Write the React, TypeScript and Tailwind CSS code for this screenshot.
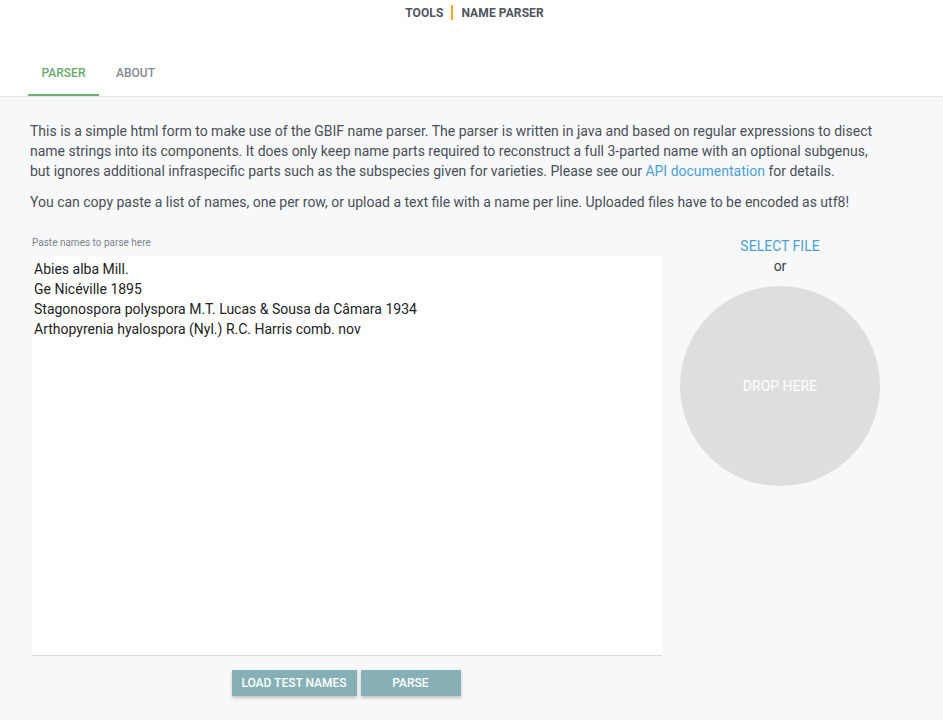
import React from 'react';

const names = [
  'Abies alba Mill.',
  'Ge Nicéville 1895',
  'Stagonospora polyspora M.T. Lucas & Sousa da Câmara 1934',
  'Arthopyrenia hyalospora (Nyl.) R.C. Harris comb. nov',
];

export default function App() {
  return (
    <div className="min-h-[720px] bg-[#f7f8fa] font-['Roboto',sans-serif] text-[#4a4f56]">
      {/* Top bar */}
      <div className="bg-white">
        <div className="flex h-[25px] items-center justify-center pl-[6px] text-[12px] font-bold tracking-[0.1px] text-[#4f555d]">
          <span>TOOLS</span>
          <span className="mx-[8px] h-[15px] w-[2px] bg-[#f5a623]" />
          <span>NAME PARSER</span>
        </div>

        {/* Tabs */}
        <div className="flex h-[72px] items-end border-b border-[#e3e5e8] pl-[28px]">
          <div className="flex h-[48px] w-[71px] flex-col items-center justify-between">
            <span className="mt-[16px] text-[12px] font-medium text-[#66ab6e]">PARSER</span>
            <span className="h-[2px] w-full bg-[#6bb073]" />
          </div>
          <div className="flex h-[48px] w-[73px] flex-col items-center">
            <span className="mt-[16px] text-[12px] font-medium text-[#838991]">ABOUT</span>
          </div>
        </div>
      </div>

      {/* Content */}
      <div className="max-w-[910px] px-[30px] pt-[24px] text-[14px] leading-[20px]">
        <p className="mb-[11px]">
          This is a simple html form to make use of the GBIF name parser. The parser is written in java and based on regular expressions to disect name strings into its components. It does only keep name parts required to reconstruct a full 3-parted name with an optional subgenus, but ignores additional infraspecific parts such as the subspecies given for varieties. Please see our{' '}
          <span className="text-[#4aa1d1]">API documentation</span> for details.
        </p>
        <p>
          You can copy paste a list of names, one per row, or upload a text file with a name per line. Uploaded files have to be encoded as utf8!
        </p>
      </div>

      <div className="mt-[24px] flex pl-[32px]">
        <div className="w-[630px]">
          <div className="mb-[6px] text-[10px] leading-[14px] text-[#7d838a]">Paste names to parse here</div>
          <div className="h-[400px] border-b border-[#d6d8db] bg-white px-[2px] pt-[3px] text-[14px] leading-[20px] text-[#222]">
            {names.map((n) => (
              <div key={n}>{n}</div>
            ))}
          </div>
          <div className="mt-[14px] flex justify-center gap-[4px] pr-[2px]">
            <button className="h-[26px] w-[125px] bg-[#86b0b5] text-[12px] font-medium text-white shadow-[0_2px_3px_rgba(0,0,0,0.22)]">
              LOAD TEST NAMES
            </button>
            <button className="h-[26px] w-[100px] bg-[#86b0b5] text-[12px] font-medium text-white shadow-[0_2px_3px_rgba(0,0,0,0.22)]">
              PARSE
            </button>
          </div>
        </div>

        <div className="ml-[18px] flex w-[200px] flex-col items-center text-[14px] leading-[20px]">
          <span className="mt-[0px] text-[#4aa1d1]">SELECT FILE</span>
          <span className="text-[#3f444a]">or</span>
          <div className="mt-[10px] flex h-[200px] w-[200px] items-center justify-center rounded-full bg-[#dedede] text-white">
            DROP HERE
          </div>
        </div>
      </div>
    </div>
  );
}
